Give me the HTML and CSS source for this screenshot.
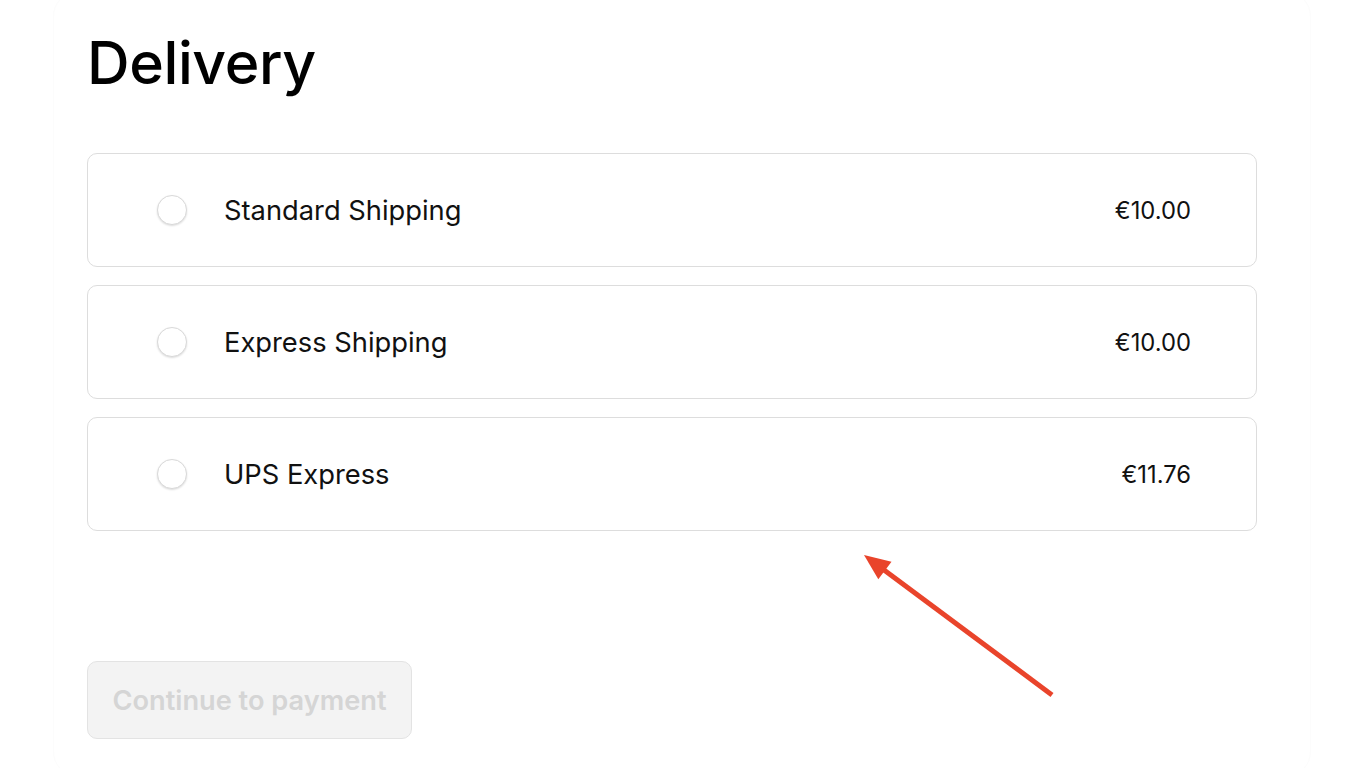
FILE: index.html
```html
<!DOCTYPE html>
<html lang="en">
<head>
<meta charset="utf-8">
<title>Delivery</title>
<link rel="stylesheet" href="styles.css">
</head>
<body>
<main class="panel">
  <h1 class="title">Delivery</h1>
  <div class="options">
    <label class="option">
      <span class="radio"></span>
      <span class="name">Standard Shipping</span>
      <span class="price">€10.00</span>
    </label>
    <label class="option">
      <span class="radio"></span>
      <span class="name">Express Shipping</span>
      <span class="price">€10.00</span>
    </label>
    <label class="option">
      <span class="radio"></span>
      <span class="name">UPS Express</span>
      <span class="price">€11.76</span>
    </label>
  </div>
  <button class="continue" disabled>Continue to payment</button>
</main>
<svg class="arrow" width="1365" height="768" viewBox="0 0 1365 768" aria-hidden="true">
  <line x1="1052" y1="695" x2="880" y2="567" stroke="#e9442b" stroke-width="5"/>
  <polygon points="864,555 891.5,561.7 878.3,579.3" fill="#e9442b"/>
</svg>
</body>
</html>
```
FILE: styles.css
```css
html, body {
  margin: 0;
  padding: 0;
  background: #ffffff;
  overflow: hidden;
}
body {
  width: 1365px;
  height: 768px;
  position: relative;
  font-family: Inter, "Liberation Sans", Arial, sans-serif;
  color: #111;
}
.panel {
  box-sizing: border-box;
  width: 1258px;
  height: 784px;
  margin: -8px 0 0 53px;
  padding: 32px 0 0 33px;
  border: 1px solid #fcfcfc;
  border-radius: 24px;
}
.title {
  margin: 0;
  font-size: 59px;
  line-height: 76px;
  font-weight: 500;
  letter-spacing: -0.4px;
  color: #000;
}
.options {
  margin-top: 52px;
  width: 1170px;
  display: flex;
  flex-direction: column;
  gap: 18px;
}
.option {
  box-sizing: border-box;
  height: 114px;
  border: 1.5px solid #dddddd;
  border-radius: 10px;
  display: flex;
  align-items: center;
  padding: 0 65px 0 69px;
}
.radio {
  box-sizing: border-box;
  width: 30px;
  height: 30px;
  border-radius: 50%;
  border: 1.5px solid #d9d9d9;
  box-shadow: 0 1px 2px rgba(0,0,0,0.14);
  background: #fff;
  flex: none;
}
.name {
  margin-left: 37px;
  font-size: 27.3px;
  color: #111;
  flex: 1;
}
.price {
  font-size: 23.8px;
  color: #111;
}
.continue {
  margin-top: 130px;
  box-sizing: border-box;
  width: 325px;
  height: 78px;
  border: 1.5px solid #e3e3e3;
  border-radius: 10px;
  background: #f3f3f3;
  color: #d5d5d5;
  font-family: Inter, "Liberation Sans", Arial, sans-serif;
  font-size: 27.2px;
  font-weight: 600;
  padding: 0;
  text-align: center;
}
.arrow {
  position: absolute;
  left: 0;
  top: 0;
  pointer-events: none;
}
```
